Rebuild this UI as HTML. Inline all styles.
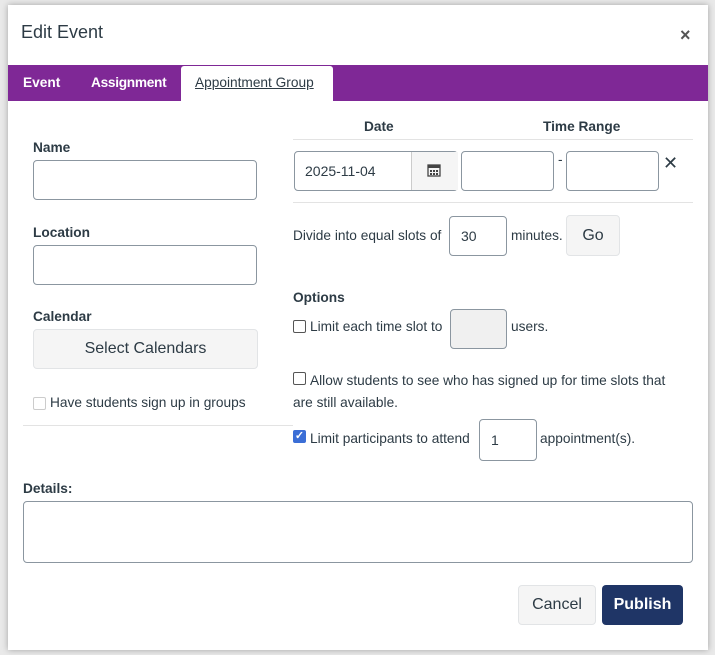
<!DOCTYPE html>
<html><head><style>
body{margin:0;width:715px;height:655px;background:#e9e9e9;font-family:"Liberation Sans",sans-serif;color:#2d3b45;position:relative;overflow:hidden}
.a{position:absolute}
.dlg{left:8px;top:5px;width:700px;height:645px;background:#fff;box-shadow:0 0 6px rgba(0,0,0,.3)}
.inp{position:absolute;border:1px solid #8b96a0;border-radius:4px;background:#fff;box-sizing:border-box;font-size:14px;padding-left:11px;display:flex;align-items:center}
.lbl{position:absolute;font-size:13.7px;font-weight:bold}
.t{position:absolute;font-size:13.7px}
.cb{position:absolute;width:11px;height:11px;border:1px solid #555;border-radius:2px;background:#fff}
.btn{position:absolute;background:#f5f5f5;border:1px solid #e2e4e6;border-radius:4px;box-sizing:border-box;font-size:16px;display:flex;align-items:center;justify-content:center}
.hr{position:absolute;height:1px;background:#e3e3e3}
</style></head><body>
<div class="a dlg"></div>
<div class="t" style="left:21px;top:22px;font-size:18px">Edit Event</div>
<div class="t" style="left:680px;top:25px;font-size:18px;font-weight:bold;color:#555">×</div>
<div class="a" style="left:8px;top:65px;width:700px;height:36px;background:#7f2896"></div>
<div class="t" style="left:23px;top:75px;color:#fff;font-weight:bold">Event</div>
<div class="t" style="left:91px;top:75px;color:#fff;font-weight:bold;letter-spacing:-0.3px">Assignment</div>
<div class="a" style="left:181px;top:66px;width:152px;height:35px;background:#fff;border-radius:3px 3px 0 0"></div>
<div class="t" style="left:195px;top:75px;text-decoration:underline">Appointment Group</div>

<div class="lbl" style="left:33px;top:140px">Name</div>
<div class="inp" style="left:33px;top:160px;width:224px;height:40px"></div>
<div class="lbl" style="left:33px;top:225px">Location</div>
<div class="inp" style="left:33px;top:245px;width:224px;height:40px"></div>
<div class="lbl" style="left:33px;top:309px">Calendar</div>
<div class="btn" style="left:33px;top:329px;width:225px;height:40px">Select Calendars</div>
<div class="cb" style="left:33px;top:397px;border-color:#ccc"></div>
<div class="t" style="left:50px;top:395px">Have students sign up in groups</div>
<div class="hr" style="left:23px;top:425px;width:270px"></div>

<div class="lbl" style="left:364px;top:119px">Date</div>
<div class="lbl" style="left:543px;top:119px">Time Range</div>
<div class="hr" style="left:293px;top:139px;width:400px"></div>
<div class="inp" style="left:294px;top:151px;width:164px;height:40px;padding-left:10px">2025-11-04</div>
<div class="a" style="left:411px;top:152px;width:46px;height:38px;background:#f5f5f5;border-left:1px solid #ccc"></div>
<svg class="a" style="left:427px;top:163px" width="14" height="14" viewBox="0 0 14 14"><rect x="1" y="2" width="12" height="11" fill="none" stroke="#444" stroke-width="1.3"/><rect x="1" y="2" width="12" height="3" fill="#444"/><g fill="#444"><rect x="3" y="7" width="2" height="2"/><rect x="6" y="7" width="2" height="2"/><rect x="9" y="7" width="2" height="2"/><rect x="3" y="10" width="2" height="2"/><rect x="6" y="10" width="2" height="2"/><rect x="9" y="10" width="2" height="2"/></g></svg>
<div class="inp" style="left:461px;top:151px;width:93px;height:40px"></div>
<div class="t" style="left:558px;top:152px">-</div>
<div class="inp" style="left:566px;top:151px;width:93px;height:40px"></div>
<div class="t" style="left:663px;top:153px;font-size:18px">✕</div>
<div class="hr" style="left:293px;top:202px;width:400px"></div>
<div class="t" style="left:293px;top:228px">Divide into equal slots of</div>
<div class="inp" style="left:449px;top:216px;width:58px;height:40px">30</div>
<div class="t" style="left:511px;top:228px">minutes.</div>
<div class="btn" style="left:566px;top:215px;width:54px;height:41px">Go</div>

<div class="lbl" style="left:293px;top:290px">Options</div>
<div class="cb" style="left:293px;top:320px"></div>
<div class="t" style="left:310px;top:319px">Limit each time slot to</div>
<div class="inp" style="left:450px;top:309px;width:57px;height:40px;background:#f0f0f0"></div>
<div class="t" style="left:511px;top:319px">users.</div>
<div class="cb" style="left:293px;top:372px"></div>
<div class="t" style="left:310px;top:370px;width:380px;line-height:22px">Allow students to see who has signed up for time slots that</div>
<div class="t" style="left:293px;top:392px;line-height:22px">are still available.</div>
<div class="a" style="left:293px;top:430px;width:13px;height:13px;background:#3b6ed6;border-radius:2px;color:#fff;font-size:11px;line-height:13px;text-align:center;font-weight:bold">✓</div>
<div class="t" style="left:310px;top:431px">Limit participants to attend</div>
<div class="inp" style="left:479px;top:419px;width:58px;height:42px">1</div>
<div class="t" style="left:540px;top:431px">appointment(s).</div>

<div class="lbl" style="left:23px;top:481px">Details:</div>
<div class="inp" style="left:23px;top:501px;width:670px;height:62px"></div>
<div class="btn" style="left:518px;top:585px;width:78px;height:40px;font-size:16px">Cancel</div>
<div class="a" style="left:602px;top:585px;width:81px;height:40px;background:#1f3566;border-radius:4px;color:#fff;font-size:16px;font-weight:bold;display:flex;align-items:center;justify-content:center">Publish</div>
</body></html>
